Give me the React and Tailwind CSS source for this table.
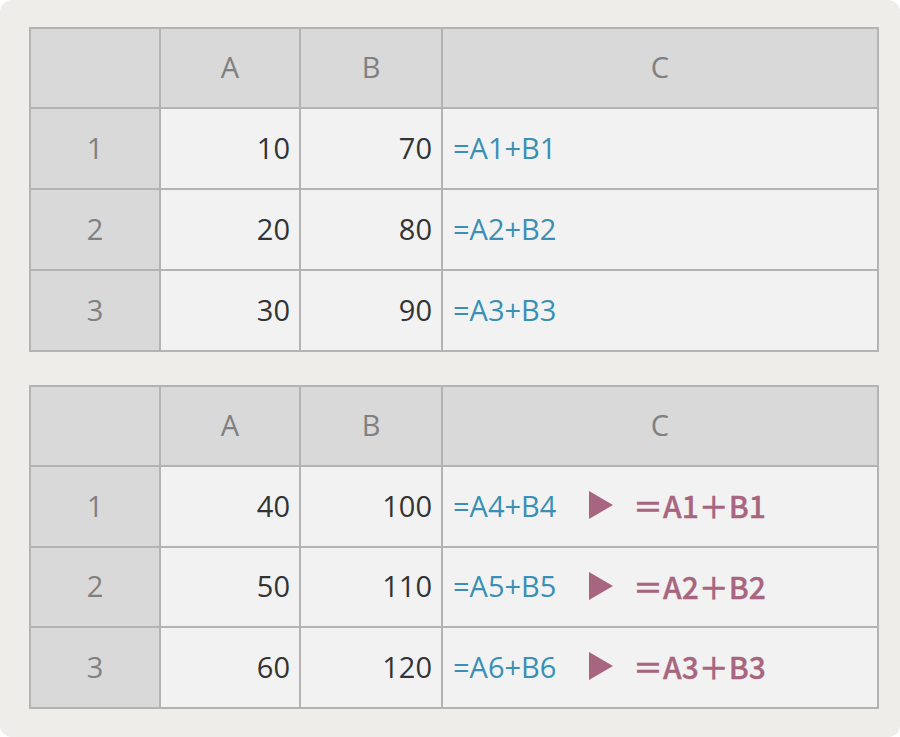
import React from "react";

const border = "border-2 border-[#b3b3b3]";

function Header() {
  return (
    <tr className="h-[80px]">
      <td className={`${border} bg-[#d9d9d9]`}></td>
      {["A", "B", "C"].map((c) => (
        <td key={c} className={`${border} bg-[#d9d9d9] text-center text-[#808080] pb-[3px]`}>
          {c}
        </td>
      ))}
    </tr>
  );
}

function Triangle() {
  return (
    <svg width="24" height="28" viewBox="0 0 24 28" className="shrink-0">
      <polygon points="0,0 24,14 0,28" fill="#a8657f" />
    </svg>
  );
}

function Table({ rows, extra, heights }) {
  return (
    <table className="table-fixed border-collapse w-[848px]">
      <colgroup>
        <col className="w-[130px]" />
        <col className="w-[140px]" />
        <col className="w-[142px]" />
        <col className="w-[436px]" />
      </colgroup>
      <tbody>
        <Header />
        {rows.map((r, i) => (
          <tr key={i} style={{ height: heights[i] }}>
            <td className={`${border} bg-[#d9d9d9] text-center text-[#808080] pb-[3px]`}>{i + 1}</td>
            <td className={`${border} bg-[#f2f2f2] text-right pr-[9px] text-[#333333] pb-[3px]`}>{r[0]}</td>
            <td className={`${border} bg-[#f2f2f2] text-right pr-[9px] text-[#333333] pb-[3px]`}>{r[1]}</td>
            <td className={`${border} bg-[#f2f2f2] pl-[10px] text-[#3a8fb5] pb-[3px]`}>
              {extra ? (
                <div className="flex items-center">
                  <span className="w-[136px] shrink-0">{r[2]}</span>
                  <Triangle />
                  <span
                    className="ml-[20px] text-[#a8657f] font-medium text-[30px] [-webkit-text-stroke:0.35px_#a8657f]"
                    style={{ fontFamily: '"Noto Sans CJK JP", "Noto Sans", sans-serif' }}
                  >
                    {r[3]}
                  </span>
                </div>
              ) : (
                r[2]
              )}
            </td>
          </tr>
        ))}
      </tbody>
    </table>
  );
}

export default function App() {
  return (
    <div className="w-[900px] h-[737px] bg-white">
      <div
        className="w-[900px] h-[737px] bg-[#eeede9] rounded-[12px] pl-[29px] pt-[27px] text-[29px] leading-none"
        style={{ fontFamily: '"Open Sans", "Noto Sans", sans-serif' }}
      >
        <Table
          heights={[81, 81, 81]}
          rows={[
            ["10", "70", "=A1+B1"],
            ["20", "80", "=A2+B2"],
            ["30", "90", "=A3+B3"],
          ]}
        />
        <div className="h-[33px]" />
        <Table
          extra
          heights={[81, 80, 81]}
          rows={[
            ["40", "100", "=A4+B4", "＝A1＋B1"],
            ["50", "110", "=A5+B5", "＝A2＋B2"],
            ["60", "120", "=A6+B6", "＝A3＋B3"],
          ]}
        />
      </div>
    </div>
  );
}
